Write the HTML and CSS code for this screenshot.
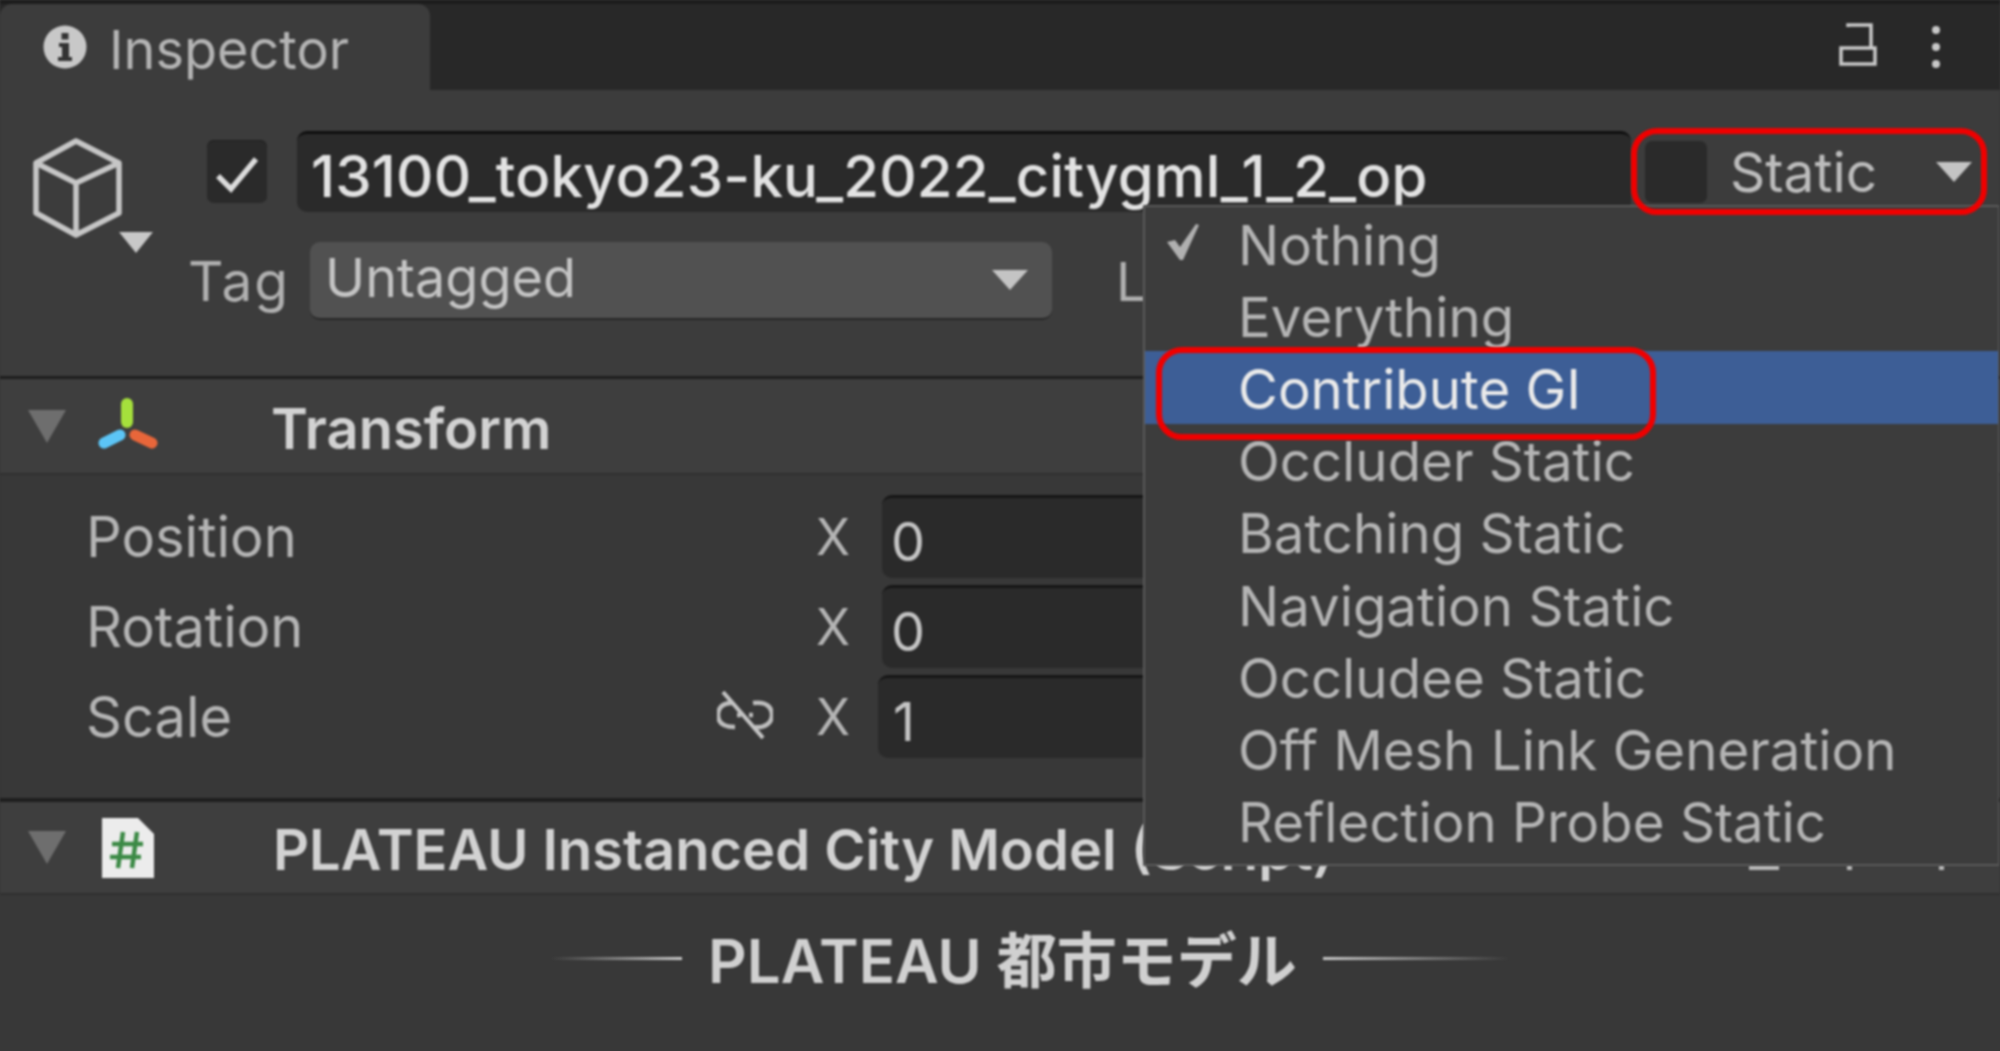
FILE: index.html
```html
<!DOCTYPE html>
<html lang="en">
<head>
    <meta charset="UTF-8">
    <title>Inspector</title>
    <link rel="stylesheet" href="styles.css">
</head>
<body>

<div class="window">
    <div class="tabbar">
        <div class="tab">
            <svg class="info-icon" viewBox="0 0 44 44">
                <circle cx="22" cy="22" r="21.5" fill="#c8c8c8"/>
                <rect x="18.500" y="8" width="7" height="6.500" fill="#333"/>
                <path d="M16 18h10v14h3v4H15v-4h4v-10h-3z" fill="#333"/>
            </svg>
            <span>Inspector</span>
        </div>
        <div class="tab-tools">
            <svg class="lock-icon" viewBox="0 0 40 44">
                <path d="M10 4V2H33V24M3 25H37V41H3Z" fill="none" stroke="#c8c8c8" stroke-width="3.500"/>
            </svg>
            <div class="dots"><i></i><i></i><i></i></div>
        </div>
    </div>

    <div class="obj-head">
        <svg class="cube" viewBox="0 0 124 120">
            <path d="M43 3L86 25V75L43 97L3 75V25ZM3 25L43 45L86 25M43 45V97" fill="none" stroke="#c6c6c6" stroke-width="5.500" stroke-linejoin="round"/>
            <path d="M86 94H120L103 115Z" fill="#c8c8c8"/>
        </svg>
        <div class="row-name">
            <div class="checkbox">
                <svg viewBox="0 0 60 63"><path d="M11 36L24 49L49 19" fill="none" stroke="#dcdcdc" stroke-width="5.500"/></svg>
            </div>
            <div class="name-field">13100_tokyo23-ku_2022_citygml_1_2_op</div>
            <div class="static-box">
                <div class="static-check"></div>
                <span class="static-label">Static</span>
                <i class="arrow"></i>
            </div>
        </div>
        <div class="row-tag">
            <span class="tag-label">Tag</span>
            <div class="tag-select">Untagged<i class="arrow"></i></div>
            <span class="layer-label">Layer</span>
        </div>
    </div>

    <div class="comp-head">
        <i class="foldout"></i>
        <svg class="comp-icon" viewBox="0 0 60 56">
            <path d="M29 6V24" stroke="#a5e03c" stroke-width="12" stroke-linecap="round"/>
            <path d="M22 37L6 45" stroke="#5cc5f6" stroke-width="11" stroke-linecap="round"/>
            <path d="M37 37L54 45" stroke="#e8663a" stroke-width="11" stroke-linecap="round"/>
        </svg>
        <span class="comp-title">Transform</span>
    </div>
    <div class="comp-body">
        <div class="vec-row">
            <span class="vec-label">Position</span>
            <span class="axis">X</span>
            <div class="vec-field">0</div>
        </div>
        <div class="vec-row">
            <span class="vec-label">Rotation</span>
            <span class="axis">X</span>
            <div class="vec-field">0</div>
        </div>
        <div class="vec-row">
            <span class="vec-label">Scale</span>
            <svg class="link-icon" viewBox="0 0 56 48">
                <path d="M16 12C6 11 1 17 1 24C1 32 7 36 18 36M36 12C50 10 55 17 55 24C55 32 48 37 38 36M20 24H24M32 24H36" fill="none" stroke="#bdbdbd" stroke-width="4.500"/>
                <path d="M6 1L46 47" stroke="#c4c4c4" stroke-width="4"/>
            </svg>
            <span class="axis">X</span>
            <div class="vec-field vec-field-scale">1</div>
        </div>
    </div>

    <div class="comp-head comp-head-script">
        <i class="foldout"></i>
        <svg class="comp-icon script-icon" viewBox="0 0 52 64">
            <path d="M0 2H36L52 18V62H0Z" fill="#ececec"/>
            <path d="M21 16L16 52M35 16L30 52M10 28H41M8 41H39" stroke="#3c8a46" stroke-width="4.500" fill="none"/>
        </svg>
        <span class="comp-title">PLATEAU Instanced City Model (Script)</span>
        <div class="comp-tools"><i class="tool-a"></i><i class="tool-b"></i><i class="tool-c"></i></div>
    </div>
    <div class="script-body">
        <i class="rule rule-left"></i>
        <span class="script-title">PLATEAU 都市モデル</span>
        <i class="rule rule-right"></i>
    </div>
</div>

<div class="popup">
    <div class="item">
        <svg class="tick" viewBox="0 0 34 38"><path d="M1 19L9 17L14 24L30 1L33 2L17 37H14Z" fill="#b0b0b0"/></svg>
        Nothing
    </div>
    <div class="item">Everything</div>
    <div class="item item-active">Contribute GI</div>
    <div class="item">Occluder Static</div>
    <div class="item">Batching Static</div>
    <div class="item">Navigation Static</div>
    <div class="item">Occludee Static</div>
    <div class="item">Off Mesh Link Generation</div>
    <div class="item">Reflection Probe Static</div>
</div>
<div class="red-box red-box-static"></div>
<div class="red-box red-box-item"></div>

</body>
</html>
```

FILE: styles.css
```css
* {
    box-sizing: border-box;
}
body {
    margin: 0;
    height: 1051px;
    background-color: #383838;
    font-family: Inter, "Noto Sans CJK JP", sans-serif;
    color: #b8b8b8;
    overflow: hidden;
}
i {
    display: block;
}
.window {
    height: 1051px;
    display: flex;
    flex-direction: column;
    border-top: 4px solid #1c1c1c;
    filter: blur(0.8px);
}

/* tab strip */
.tabbar {
    height: 86px;
    display: flex;
    justify-content: space-between;
    background-color: #282828;
}
.tab {
    width: 430px;
    display: flex;
    align-items: center;
    padding: 0 0 0 43px;
    gap: 22px;
    background-color: #3c3c3c;
    border-radius: 12px 12px 0 0;
    font-size: 54px;
    color: #b4b4b4;
}
.tab span {
    margin-top: 5px;
}
.info-icon {
    width: 44px;
    height: 44px;
}
.tab-tools {
    display: flex;
    align-items: flex-start;
    padding: 19px 60px 0 0;
    gap: 54px;
}
.lock-icon {
    width: 40px;
    height: 44px;
}
.dots {
    display: flex;
    flex-direction: column;
    gap: 9px;
    padding-top: 3px;
}
.dots i {
    width: 8px;
    height: 8px;
    border-radius: 50%;
    background-color: #c8c8c8;
}

/* object header */
.obj-head {
    height: 289px;
    padding: 38px 13px 0 33px;
    display: grid;
    grid-template-columns: 157px 1fr;
    grid-template-rows: 87px 78px;
    row-gap: 27px;
    background-color: #3c3c3c;
    border-bottom: 3px solid #1e1e1e;
}
.cube {
    grid-row: 1 / 3;
    width: 124px;
    height: 120px;
    margin-top: 10px;
}
.row-name {
    display: flex;
    align-items: center;
    padding-left: 17px;
}
.checkbox {
    width: 60px;
    height: 63px;
    margin-right: 30px;
    background-color: #2a2a2a;
    border-radius: 7px;
    box-shadow: inset 0 1px 0 #1f1f1f;
}
.checkbox svg {
    display: block;
}
.name-field {
    flex: 1;
    height: 81px;
    padding-left: 14px;
    line-height: 84px;
    background-color: #2a2a2a;
    border-top: 3px solid #0f0f0f;
    border-radius: 10px;
    font-size: 58px;
    font-weight: 500;
    letter-spacing: 0.2px;
    color: #e2e2e2;
    white-space: nowrap;
}
.static-box {
    width: 356px;
    height: 87px;
    display: flex;
    align-items: center;
    padding-left: 14px;
}
.static-check {
    width: 62px;
    height: 62px;
    margin-right: 23px;
    background-color: #2a2a2a;
    border-radius: 7px;
}
.static-label {
    font-size: 55px;
    color: #bcbcbc;
}
.arrow {
    width: 0;
    height: 0;
    margin-left: auto;
    border-left: 18px solid transparent;
    border-right: 18px solid transparent;
    border-top: 20px solid #c4c4c4;
}
.static-box .arrow {
    margin-right: 15px;
}
.row-tag {
    display: flex;
    align-items: center;
    margin-left: -2px;
}
.tag-label {
    width: 122px;
    font-size: 55px;
    letter-spacing: 2px;
    color: #b0b0b0;
}
.tag-select {
    width: 742px;
    height: 78px;
    display: flex;
    align-items: center;
    padding: 0 24px 6px 15px;
    background-color: #515151;
    border-bottom: 2px solid #262626;
    border-radius: 10px;
    font-size: 54px;
    color: #c4c4c4;
}
.tag-select .arrow {
    margin-top: 6px;
}
.layer-label {
    margin-left: 64px;
    font-size: 54px;
    color: #b0b0b0;
}

/* components */
.comp-head {
    height: 96px;
    position: relative;
    display: flex;
    align-items: center;
    padding-left: 28px;
    background-color: #3e3e3e;
    border-bottom: 2px solid #303030;
}
.foldout {
    width: 0;
    height: 0;
    border-left: 19px solid transparent;
    border-right: 19px solid transparent;
    border-top: 33px solid #6e6e6e;
}
.comp-icon {
    width: 60px;
    height: 56px;
    margin-left: 32px;
}
.comp-title {
    margin: 5px 0 0 113px;
    font-size: 56px;
    font-weight: 600;
    color: #d2d2d2;
    white-space: nowrap;
}
.comp-body {
    height: 323px;
    display: flex;
    flex-direction: column;
    gap: 7px;
    padding: 20px 0 0 86px;
    background-color: #383838;
}
.vec-row {
    height: 83px;
    display: flex;
    align-items: center;
}
.vec-label {
    width: 730px;
    font-size: 56px;
    color: #b4b4b4;
}
.link-icon {
    width: 56px;
    height: 48px;
    margin: -4px 43px 0 -99px;
}
.axis {
    width: 66px;
    font-size: 50px;
    color: #b4b4b4;
}
.vec-field {
    width: 400px;
    height: 83px;
    padding-left: 9px;
    line-height: 87px;
    background-color: #2a2a2a;
    border-top: 3px solid #161616;
    border-radius: 10px;
    font-size: 54px;
    color: #c4c4c4;
}
.vec-field-scale {
    margin-left: -4px;
    padding-left: 15px;
}

.comp-head-script {
    height: 97px;
    border-top: 4px solid #1e1e1e;
}
.script-icon {
    width: 52px;
    height: 64px;
    margin-left: 36px;
}
.script-icon + .comp-title {
    margin-left: 119px;
}
.comp-tools {
    position: absolute;
    top: 63px;
    left: 0;
    width: 100%;
}
.comp-tools i {
    position: absolute;
    top: 0;
    height: 5px;
    background-color: #b8b8b8;
}
.tool-a {
    left: 1749px;
    width: 30px;
}
.tool-b {
    left: 1847px;
    width: 5px;
}
.tool-c {
    left: 1939px;
    width: 5px;
}
.script-body {
    height: 125px;
    display: flex;
    align-items: center;
    padding: 2px 490px 0 550px;
    gap: 26px;
}
.script-title {
    margin-top: -5px;
    font-size: 60px;
    font-weight: 600;
    color: #d0d0d0;
    white-space: nowrap;
}
.rule {
    height: 3px;
}
.rule-left {
    width: 132px;
    background: linear-gradient(to right, #38383800, #c8c8c8);
}
.rule-right {
    flex: 1;
    background: linear-gradient(to right, #c8c8c8, #38383800);
}

/* static flags popup */
.popup {
    position: absolute;
    left: 1143px;
    top: 205px;
    width: 856px;
    height: 661px;
    background-color: #3c3c3c;
    border: 2px solid #5a5a5a;
    border-right-width: 1px;
    filter: blur(0.8px);
}
.item {
    height: 72.200px;
    display: flex;
    align-items: center;
    position: relative;
    padding: 3px 0 0 93px;
    font-size: 54.600px;
    color: #b4b4b4;
    white-space: nowrap;
}
.item-active {
    background-color: #3d5e96;
    color: #eaeaea;
}
.tick {
    position: absolute;
    left: 21px;
    top: 16px;
    width: 34px;
    height: 38px;
}

/* red call-outs drawn over the screenshot */
.red-box {
    position: absolute;
    border: 6px solid #f00000;
    border-radius: 26px;
    filter: blur(0.8px);
}
.red-box-static {
    left: 1631px;
    top: 128px;
    width: 356px;
    height: 87px;
}
.red-box-item {
    left: 1156px;
    top: 347px;
    width: 500px;
    height: 93px;
}
```
